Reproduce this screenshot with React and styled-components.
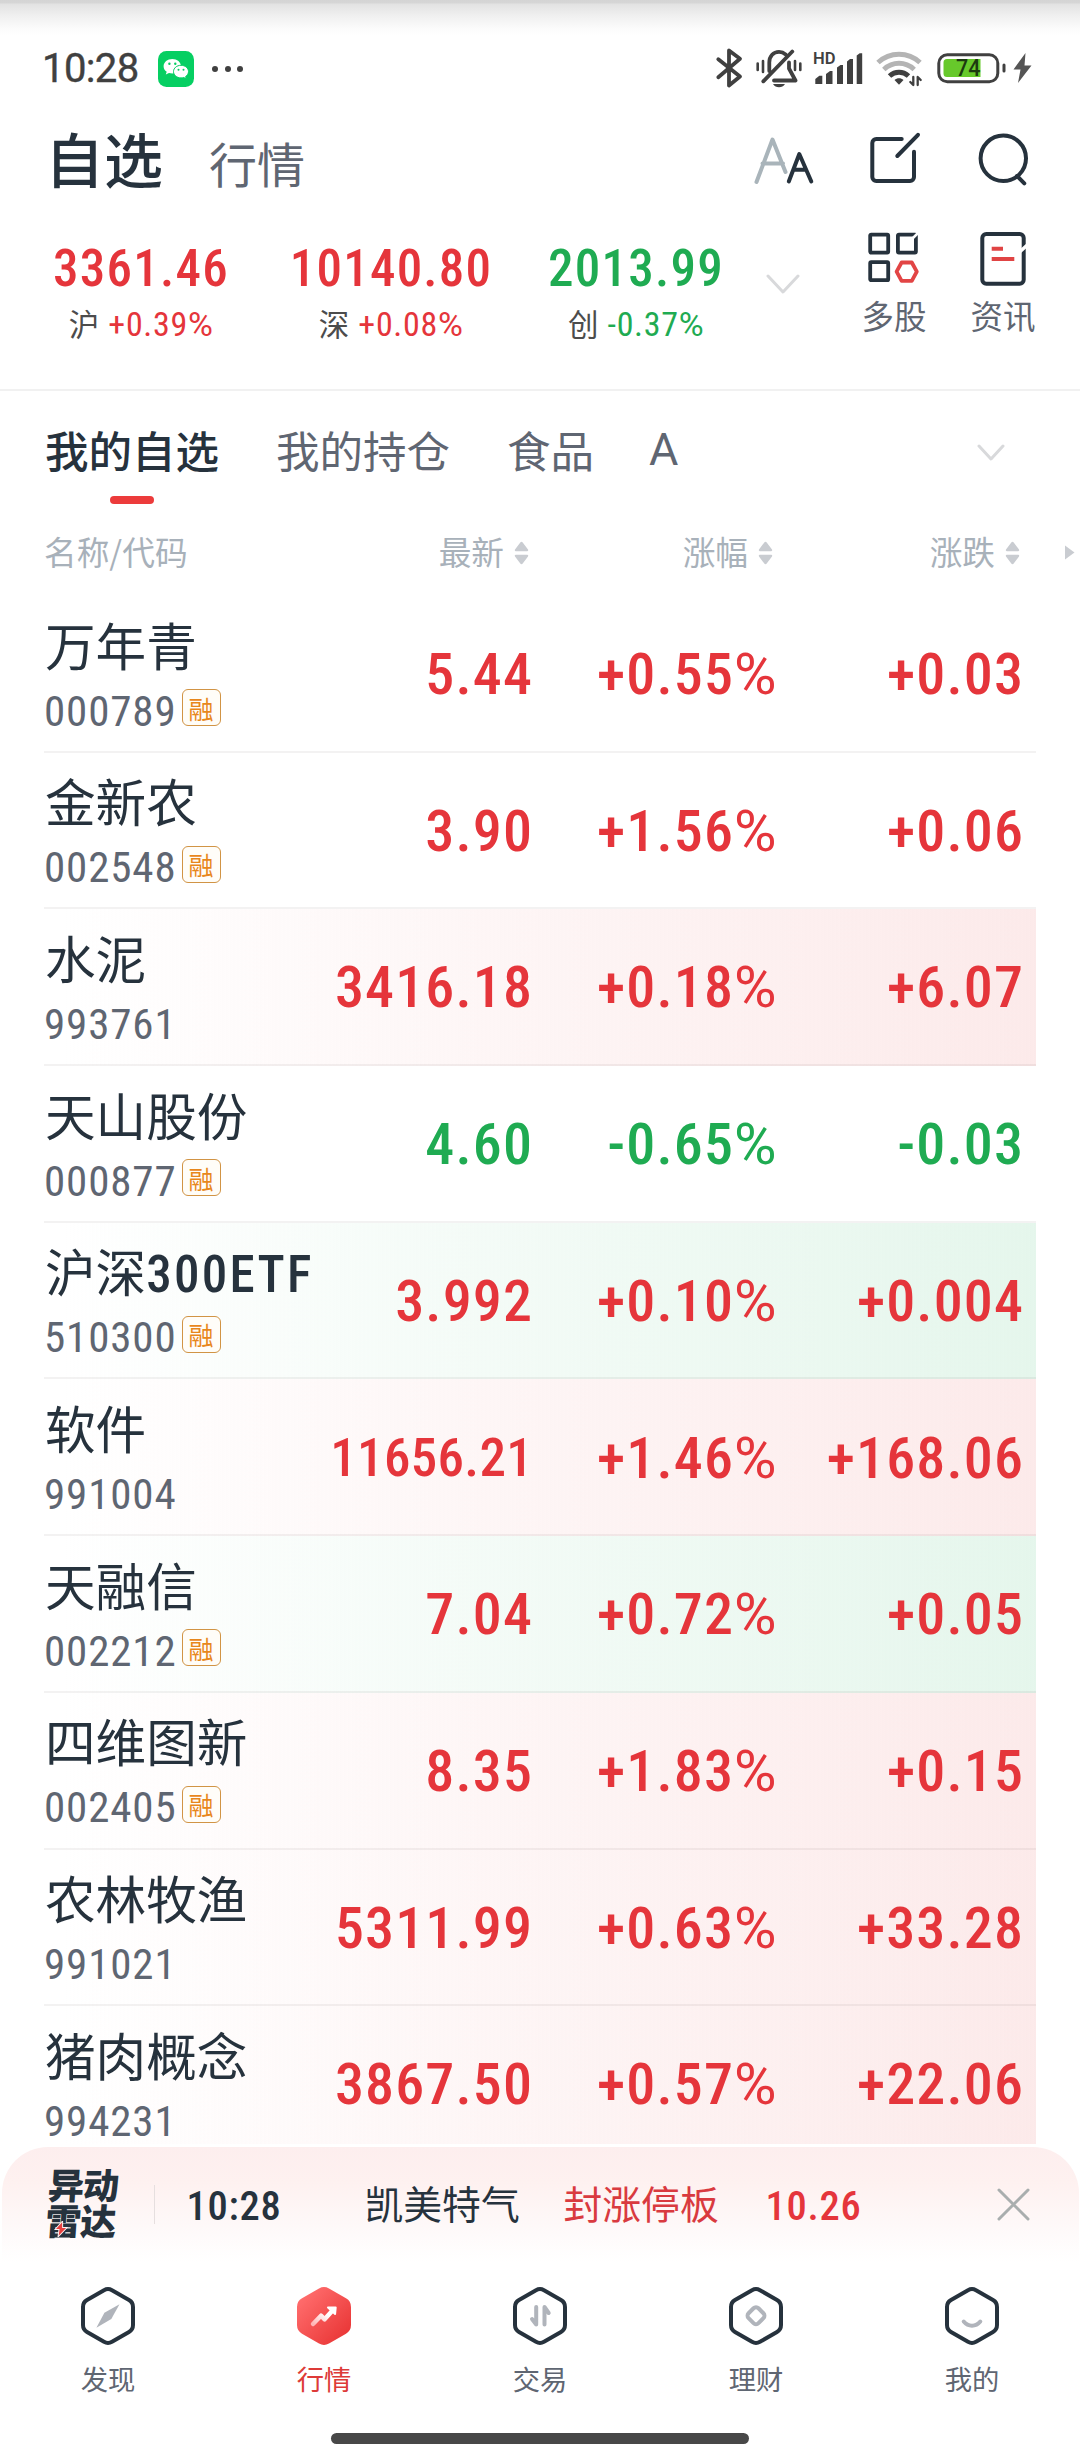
import React from "react";
import styled, { createGlobalStyle, css } from "styled-components";

const CJK = `"Noto Sans CJK SC", sans-serif`;
const NUM = `"Roboto Condensed", Roboto, "Noto Sans CJK SC", sans-serif`;
const INK = "#26323d";
const GREY = "#5f6672";
const RED = "#e5353b";
const GREEN = "#1fab52";

const tone = (t) => (t === "down" ? GREEN : RED);

const Global = createGlobalStyle`
  * { box-sizing: border-box; }
  body { margin: 0; background: #fff; }
  svg { display: block; flex: none; }
`;

const Screen = styled.div`
  width: 1080px;
  height: 2460px;
  display: flex;
  flex-direction: column;
  overflow: hidden;
  background: #fff;
  font-family: ${CJK};
  color: ${INK};
`;

const numeric = css`
  font-family: ${NUM};
  font-stretch: 75%;
  font-weight: 480;
  letter-spacing: 0.02em;
  white-space: nowrap;
`;

/* ---------- status bar ---------- */

const StatusBar = styled.header`
  height: 100px;
  padding: 38px 47px 0 42px;
  display: flex;
  align-items: center;
  justify-content: space-between;
  background: linear-gradient(#d4d4d4 0, #d6d6d6 3px, #e2e2e2 4px, #f0f0f0 16px, #fbfbfb 28px, #fff 36px);
`;

const StatusLeft = styled.div`
  display: flex;
  align-items: center;
`;

const Clock = styled.span`
  width: 116px;
  font: 400 40px/46px Roboto, sans-serif;
  -webkit-text-stroke: 0.4px #404040;
  letter-spacing: -0.6px;
  color: #404040;
`;

const Dots = styled.div`
  display: flex;
  gap: 6.5px;
  margin-left: 18px;
  i {
    width: 6px;
    height: 6px;
    border-radius: 50%;
    background: #404040;
  }
`;

const StatusRight = styled.div`
  display: grid;
  grid-template-columns: 40px 58px 62px 61px 76px 22px;
`;

/* ---------- header ---------- */

const TitleRow = styled.div`
  height: 112px;
  padding: 0 47px 0 45px;
  display: flex;
  align-items: center;
`;

const Title = styled.h1`
  margin: 3px 0 0;
  font-size: 59px;
  font-weight: 500;
  line-height: 70px;
`;

const SubTitle = styled.span`
  margin: 12px auto 0 46px;
  font-size: 48px;
  line-height: 60px;
  color: ${GREY};
`;

const Tools = styled.div`
  display: grid;
  grid-template-columns: 111px 108px 60px;
`;

const Market = styled.section`
  height: 179px;
  padding: 18px 47px 0 16px;
  display: flex;
  border-bottom: 2px solid #f1f1f1;
`;

const Quote = styled.div`
  width: ${(p) => p.$w}px;
  padding-top: 8.5px;
  display: flex;
  flex-direction: column;
  align-items: center;
  gap: 4.5px;
`;

const QuoteValue = styled.span`
  ${numeric}
  font-size: 51px;
  line-height: 60px;
  letter-spacing: 0.024em;
  color: ${(p) => tone(p.$t)};
`;

const QuoteChange = styled.span`
  display: flex;
  align-items: baseline;
  gap: 9px;
  font-size: 30.5px;
  line-height: 40px;
  color: #4c4c4c;
  b {
    ${numeric}
    font-size: 34px;
    font-weight: 450;
    color: ${(p) => tone(p.$t)};
  }
`;

const Percent = styled.span`
  font-family: Roboto, sans-serif;
  font-stretch: 100%;
  font-weight: 400;
  letter-spacing: 0.01em;
`;

const ExpandBox = styled.div`
  width: 54px;
  margin-right: 54px;
  padding: 43.5px 0 0 10px;
`;

const Shortcut = styled.div`
  width: 60px;
  margin-right: ${(p) => (p.$last ? 0 : 49)}px;
  display: flex;
  flex-direction: column;
  align-items: center;
  gap: 5px;
  font-size: 32.5px;
  line-height: 40px;
  white-space: nowrap;
  color: ${GREY};
`;

/* ---------- tabs ---------- */

const Tabs = styled.nav`
  height: 114px;
  padding: 28.5px 75px 0 45px;
  display: flex;
  align-items: flex-start;
  gap: 57px;
`;

const Tab = styled.div`
  display: flex;
  flex-direction: column;
  align-items: center;
  gap: 16.5px;
  font-size: 43.5px;
  line-height: 60px;
  font-weight: ${(p) => (p.$active ? 500 : 400)};
  color: ${(p) => (p.$active ? INK : GREY)};
  &::after {
    content: "";
    width: ${(p) => (p.$active ? 44 : 0)}px;
    height: 8px;
    border-radius: 4px;
    background: #ec3b3b;
  }
`;

const Latin = styled.span`
  margin-left: -2px;
  font-family: Roboto, sans-serif;
  font-size: 45px;
`;

const TabExpand = styled.div`
  margin: 24px 0 0 auto;
`;

/* ---------- table ---------- */

const columns = "280px 207px 244px 247px";

const Head = styled.div`
  height: 91px;
  padding: 1.5px 0 0 44px;
  display: grid;
  grid-template-columns: ${columns} 1fr;
  align-items: center;
  font-size: 32.700px;
  line-height: 40px;
  color: #a8b1ba;
`;

const HeadCell = styled.div`
  display: flex;
  align-items: center;
  justify-content: flex-end;
  gap: 10px;
  padding-right: 2px;
  svg {
    margin-top: 4px;
  }
`;

const MoreColumns = styled.div`
  padding: 3px 0 0 43px;
`;

const List = styled.main`
  height: 1548px;
  overflow: hidden;
`;

const washes = { red: "252, 234, 234", green: "229, 246, 236" };

const Row = styled.div`
  height: 156.7px;
  margin: 0 44px;
  display: grid;
  grid-template-columns: ${columns};
  align-items: center;
  border-bottom: 2px solid rgba(50, 40, 40, 0.06);
  background: ${(p) =>
    p.$wash
      ? `linear-gradient(90deg, rgba(${washes[p.$wash]}, 0) 2%, rgb(${washes[p.$wash]}) 100%)`
      : "none"};
`;

const Stock = styled.div`
  align-self: start;
  padding-top: 17.500px;
  display: flex;
  flex-direction: column;
  gap: 12px;
`;

const Name = styled.div`
  height: 60px;
  margin-left: 1px;
  font-size: 50.600px;
  line-height: 60px;
  white-space: nowrap;
  span {
    ${numeric}
    font-size: 51px;
    letter-spacing: 0.045em;
  }
`;

const Code = styled.div`
  ${numeric}
  display: flex;
  align-items: center;
  gap: 5px;
  height: 50px;
  font-size: 43px;
  font-weight: 430;
  letter-spacing: 0.02em;
  color: ${GREY};
`;

const Badge = styled.span`
  width: 39px;
  height: 37px;
  margin-top: -6px;
  display: flex;
  align-items: center;
  justify-content: center;
  border: 1.5px solid #d19445;
  border-radius: 6px;
  font: 400 25px/32px ${CJK};
  letter-spacing: 0;
  color: #e8871c;
  background: #fffdf8;
`;

const Num = styled.div`
  ${numeric}
  justify-self: end;
  margin: 1.5px calc(-0.02em - 1px) 0 0;
  font-size: ${(p) => (p.$small ? 53 : 58)}px;
  letter-spacing: ${(p) => (p.$small ? 0.006 : 0.02)}em;
  line-height: 70px;
  color: ${(p) => tone(p.$t)};
`;

/* ---------- radar strip ---------- */

const Radar = styled.aside`
  height: 115px;
  margin: 3px 1.5px 0;
  padding: 0 49px 0 45px;
  display: grid;
  grid-template-columns: 107px 33px 178px 199px 202px 1fr 33px;
  align-items: center;
  border-radius: 46px 46px 0 0;
  background: linear-gradient(#fdeeee 0, #fef1f0 30%, #fefafa 75%, #fff 100%);
`;

const Logo = styled.div`
  position: relative;
  width: 74px;
  margin-top: -8px;
  font-size: 36px;
  line-height: 36px;
  font-weight: 900;
  letter-spacing: -1px;
  transform: skewX(-4deg);
  svg {
    position: absolute;
    left: 9px;
    top: 56px;
  }
`;

const Divider = styled.div`
  width: 1px;
  height: 39px;
  background: #e6dfdf;
`;

const RadarNum = styled.span`
  ${numeric}
  margin-top: 2px;
  font-size: 40.500px;
  letter-spacing: 0.018em;
  color: ${(p) => p.$c};
`;

const RadarText = styled.span`
  margin-top: -6px;
  font-size: 38.8px;
  line-height: 50px;
  color: ${(p) => p.$c};
`;

/* ---------- bottom navigation ---------- */

const Nav = styled.nav`
  height: 171px;
  padding-top: 24px;
  display: grid;
  grid-template-columns: repeat(5, 1fr);
`;

const NavItem = styled.div`
  display: flex;
  flex-direction: column;
  align-items: center;
  gap: 14.500px;
  font-size: 27.3px;
  line-height: 34px;
  color: ${(p) => (p.$active ? "#dd3a38" : GREY)};
`;

const HomeBar = styled.div`
  width: 418px;
  height: 11px;
  margin: 0 auto;
  border-radius: 6px;
  background: #484848;
`;

/* ---------- drawings ---------- */

const Line = ({ w, h, sw = 4, c = INK, children }) => (
  <svg width={w} height={h} viewBox={`0 0 ${w} ${h}`} fill="none" stroke={c} strokeWidth={sw} strokeLinecap="round" strokeLinejoin="round">
    {children}
  </svg>
);

const WeChat = () => (
  <svg width="36" height="36" viewBox="0 0 36 36">
    <rect width="36" height="36" rx="8.5" fill="#06cf62" />
    <path d="M14.3 8C9.4 8 5.6 11.2 5.6 15.2c0 2.3 1.2 4.2 3.1 5.5l-.9 2.8 3.2-1.6c1 .3 2.2.5 3.3.5 4.8 0 8.7-3.200 8.7-7.200S19.100 8 14.300 8z" fill="#fff" />
    <circle cx="11.4" cy="12.8" r="1.2" fill="#06cf62" />
    <circle cx="17.3" cy="12.8" r="1.2" fill="#06cf62" />
    <path d="M23 14.300c-4.200 0-7.500 2.800-7.500 6.300s3.300 6.300 7.500 6.300c1 0 1.900-.1 2.800-.4l2.500 1.400-.7-2.400c1.800-1.200 2.900-2.900 2.900-4.900 0-3.500-3.300-6.300-7.500-6.300z" fill="#fff" stroke="#06cf62" strokeWidth="1" />
    <circle cx="20.5" cy="18.8" r="1" fill="#06cf62" />
    <circle cx="25.5" cy="18.8" r="1" fill="#06cf62" />
  </svg>
);

const DARK = "#404040";

const Bluetooth = () => (
  <Line w={30} h={46} sw={3.8} c={DARK}>
    <path d="M4.300 13.200 26 30.500 15 39.500V4.500L26 12.800 4.300 31.300" />
  </Line>
);

const BellOff = () => (
  <Line w={50} h={46} sw={3.8} c={DARK}>
    <path d="M15.300 25V16.500C15.300 10 19.500 5.800 25 5.800c2.500 0 4.800.9 6.500 2.500M9.300 35.300 38.300 5.500M35 16.500v6l6.500 12H20" />
    <path d="M3.700 17.500v6.500M9 15v11M41 15v9M46.300 17.500v6.500" strokeWidth="2.600" />
    <path d="M19 38h12c-1.400 2.300-3.500 3.200-6 3.200S20.400 40.300 19 38z" fill={DARK} stroke="none" />
  </Line>
);

const Signal = () => (
  <svg width="52" height="46" viewBox="0 0 52 46" fill={DARK}>
    <text x="1" y="18" fontFamily="Roboto, sans-serif" fontWeight="600" fontSize="16" textLength="22.5" lengthAdjust="spacingAndGlyphs">HD</text>
    <path d="M3.300 33l4-3.300h3V38h-7z" />
    <path d="M14 28l4-3h2.500v13H14z" />
    <path d="M25 21.500l3.500-2.500H31v19h-6z" />
    <path d="M35 15.500l3-2.500h3v25h-6z" />
    <path d="M44.700 9.500l3-2.200h2.500V38h-5.500z" />
  </svg>
);

const Wifi = () => (
  <Line w={50} h={46} sw={5} c="#b4b4b4">
    <path d="M4 16.500C16 5.500 34 5.500 46 16.500" strokeLinecap="butt" />
    <path d="M9.800 23.500c9-8.200 21.400-8.200 30.400 0" strokeLinecap="butt" />
    <path d="M15.500 30c5.500-5 13.500-5 19 0" stroke={DARK} strokeLinecap="butt" />
    <path d="M20.500 34c2.500-2.500 6.500-2.500 9 0L25 38.800z" fill={DARK} stroke="none" />
    <path d="M39.300 31v8l-3-3M43.700 39v-8l3 3" stroke={DARK} strokeWidth="2.300" />
  </Line>
);

const Battery = () => (
  <svg width="72" height="46" viewBox="0 0 72 46">
    <rect x="3.8" y="8.8" width="59" height="27" rx="8.5" fill="none" stroke={DARK} strokeWidth="3" />
    <rect x="67.500" y="17.500" width="3" height="9" rx="1.500" fill={DARK} />
    <path d="M12 13h33.500v18H12a3.500 3.500 0 0 1-3.500-3.500v-11A3.500 3.500 0 0 1 12 13z" fill="#67c92b" />
    <text x="21" y="30.300" fontFamily="Roboto, sans-serif" fontWeight="500" fontSize="23" textLength="24.500" lengthAdjust="spacingAndGlyphs" fill="#1c3a10">74</text>
  </svg>
);

const Bolt = () => (
  <svg width="22" height="46" viewBox="0 0 22 46">
    <path d="M14.500 7 2.500 23.500h7L7 37 20.500 19.500h-7z" fill="#555" />
  </svg>
);

const FontSize = () => (
  <Line w={60} h={60}>
    <path d="M2.500 56 18.500 13.500 31.500 46M8.500 37.500H29" stroke="#a9b4ba" />
    <path d="M34.800 55.500 45.300 28 57.300 55.500M39.500 43.800H52" />
  </Line>
);

const Edit = () => (
  <Line w={60} h={60}>
    <path d="M36.700 13H11.300a4 4 0 0 0-4 4V51a4 4 0 0 0 4 4H45a4 4 0 0 0 4-4V25.700M53 8.800 32.300 30" />
  </Line>
);

const Search = () => (
  <Line w={60} h={60}>
    <circle cx="30.300" cy="32.300" r="22.700" />
    <path d="M44 50l7.300 7.300" />
  </Line>
);

const MultiStock = () => (
  <Line w={60} h={60} sw={3.8}>
    <rect x="6.200" y="4.600" width="18" height="18" rx="1" />
    <rect x="33.900" y="4.600" width="18" height="18" rx="1" />
    <rect x="6.200" y="32.200" width="18" height="18" rx="1" />
    <path d="M32.600 41.700l5-9.200h10.200l5 9.200-5 9.200H37.600z" stroke="#e24545" />
    <path d="M47 10l8-8" stroke="#fff" strokeWidth="2.500" />
  </Line>
);

const News = () => (
  <Line w={60} h={60}>
    <rect x="9.300" y="4" width="41.400" height="49.700" rx="4" />
    <path d="M18.700 18.700H30M18.700 29H41.300" stroke="#e04444" strokeLinecap="butt" />
    <path d="M46 22.500l10-9" stroke="#fff" strokeWidth="3.500" />
  </Line>
);

const Chevron = ({ w, h }) => (
  <Line w={w + 4} h={h + 4} sw={3} c="#d8d9db">
    <path d={`M2 2l${w / 2} ${h}L${w + 2} 2`} />
  </Line>
);

const Sort = () => (
  <svg width="15" height="24" viewBox="0 0 15 24" fill="#c9ccd1">
    <path d="M6.300 1.400 1 8.600c-.5.8-.2 1.600.8 1.600h11.400c1 0 1.300-.8.8-1.600L8.700 1.400c-.7-.9-1.700-.9-2.400 0z" />
    <path d="M6.300 22.600 1 15.400c-.5-.8-.2-1.600.8-1.600h11.400c1 0 1.300.8.8 1.600l-5.300 7.200c-.7.9-1.700.9-2.400 0z" />
  </svg>
);

const HEX =
  "M26 4.200q4-2.300 8 0L51 14q4 2.300 4 7V39q0 4.700-4 7L34 55.800q-4 2.300-8 0L9 46q-4-2.300-4-7V21q0-4.700 4-7z";
const PALE = "#b0b4bb";

const glyphs = {
  discover: <path d="M41.500 18.300 33.300 33 18.400 41.700 26.400 26.800z" fill={PALE} stroke="none" />,
  trade: (
    <g stroke={PALE}>
      <path d="M26.200 21V38.500L22 33" />
      <path d="M34.500 38.500V21l4.200 6" />
    </g>
  ),
  wealth: <rect x="23" y="22.700" width="14" height="14" rx="3.500" transform="rotate(45 30 29.700)" stroke={PALE} />,
  mine: <path d="M21.700 35.500c4.500 5.500 12.100 5.500 16.600 0" stroke={PALE} />,
};

const NavIcon = ({ kind }) =>
  kind === "market" ? (
    <Line w={60} h={60} sw={4.5}>
      <defs>
        <linearGradient id="hot" x1="0" y1="0" x2="1" y2="1">
          <stop offset="0.100" stopColor="#ff6c6c" />
          <stop offset="0.900" stopColor="#ea3838" />
        </linearGradient>
        <linearGradient id="rise" x1="0" y1="1" x2="1" y2="0">
          <stop offset="0" stopColor="#ffb5b5" />
          <stop offset="0.700" stopColor="#fff" />
        </linearGradient>
      </defs>
      <path d={HEX} fill="url(#hot)" stroke="url(#hot)" strokeWidth="4" />
      <path d="M19 38l8-8.300 3.600 3.600L39 24" stroke="url(#rise)" />
      <path d="M34 21.500h7.700l-.6 6.500z" fill="#fff" stroke="#fff" strokeWidth="2" />
    </Line>
  ) : (
    <Line w={60} h={60}>
      <path d={HEX} />
      {glyphs[kind]}
    </Line>
  );

/* ---------- data ---------- */

const stocks = [
  ["万年青", "000789", 1, "5.44", "+0.55", "+0.03", "up"],
  ["金新农", "002548", 1, "3.90", "+1.56", "+0.06", "up"],
  ["水泥", "993761", 0, "3416.18", "+0.18", "+6.07", "up", "red"],
  ["天山股份", "000877", 1, "4.60", "-0.65", "-0.03", "down"],
  [<>沪深<span>300ETF</span></>, "510300", 1, "3.992", "+0.10", "+0.004", "up", "green"],
  ["软件", "991004", 0, "11656.21", "+1.46", "+168.06", "up", "red"],
  ["天融信", "002212", 1, "7.04", "+0.72", "+0.05", "up", "green"],
  ["四维图新", "002405", 1, "8.35", "+1.83", "+0.15", "up", "red"],
  ["农林牧渔", "991021", 0, "5311.99", "+0.63", "+33.28", "up", "red"],
  ["猪肉概念", "994231", 0, "3867.50", "+0.57", "+22.06", "up", "red"],
];

const quotes = [
  ["3361.46", "沪", "+0.39", "up", 250],
  ["10140.80", "深", "+0.08", "up", 250],
  ["2013.99", "创", "-0.37", "down", 240],
];

const navItems = [
  ["discover", "发现"],
  ["market", "行情"],
  ["trade", "交易"],
  ["wealth", "理财"],
  ["mine", "我的"],
];

export default function App() {
  return (
    <Screen>
      <Global />
      <StatusBar>
        <StatusLeft>
          <Clock>10:28</Clock>
          <WeChat />
          <Dots><i /><i /><i /></Dots>
        </StatusLeft>
        <StatusRight>
          <Bluetooth />
          <BellOff />
          <Signal />
          <Wifi />
          <Battery />
          <Bolt />
        </StatusRight>
      </StatusBar>

      <TitleRow>
        <Title>自选</Title>
        <SubTitle>行情</SubTitle>
        <Tools>
          <FontSize />
          <Edit />
          <Search />
        </Tools>
      </TitleRow>

      <Market>
        {quotes.map(([value, label, change, t, w]) => (
          <Quote key={label} $w={w}>
            <QuoteValue $t={t}>{value}</QuoteValue>
            <QuoteChange $t={t}>
              {label}
              <b>{change}<Percent>%</Percent></b>
            </QuoteChange>
          </Quote>
        ))}
        <ExpandBox><Chevron w={30} h={16} /></ExpandBox>
        <Shortcut><MultiStock />多股</Shortcut>
        <Shortcut $last><News />资讯</Shortcut>
      </Market>

      <Tabs>
        <Tab $active>我的自选</Tab>
        <Tab>我的持仓</Tab>
        <Tab>食品</Tab>
        <Tab><Latin>A</Latin></Tab>
        <TabExpand><Chevron w={24} h={13} /></TabExpand>
      </Tabs>

      <Head>
        <span>名称/代码</span>
        <HeadCell>最新<Sort /></HeadCell>
        <HeadCell>涨幅<Sort /></HeadCell>
        <HeadCell>涨跌<Sort /></HeadCell>
        <MoreColumns>
          <svg width="10" height="15" viewBox="0 0 10 15" fill="#c9ccd1"><path d="M0 .5 9.500 7.500 0 14.500z" /></svg>
        </MoreColumns>
      </Head>

      <List>
        {stocks.map(([name, code, margin, last, pct, diff, t, wash]) => (
          <Row key={code} $wash={wash}>
            <Stock>
              <Name>{name}</Name>
              <Code>
                {code}
                {margin ? <Badge>融</Badge> : null}
              </Code>
            </Stock>
            <Num $t={t} $small={last.length > 7}>{last}</Num>
            <Num $t={t}>{pct}<Percent>%</Percent></Num>
            <Num $t={t}>{diff}</Num>
          </Row>
        ))}
      </List>

      <Radar>
        <Logo>
          异动<br />雷达
          <svg width="14" height="16" viewBox="0 0 14 16"><path d="M8 0 1 8.500h4L4.500 16 13 6.500H8.500z" fill="#e8413f" stroke="#fdf5f5" strokeWidth="1" /></svg>
        </Logo>
        <Divider />
        <RadarNum $c={INK}>10:28</RadarNum>
        <RadarText $c={INK}>凯美特气</RadarText>
        <RadarText $c="#d93a3f">封涨停板</RadarText>
        <RadarNum $c={RED}>10.26</RadarNum>
        <Line w={33} h={33} sw={3} c="#a9aeae"><path d="M2 2l29 29M31 2L2 31" /></Line>
      </Radar>

      <Nav>
        {navItems.map(([kind, label]) => (
          <NavItem key={kind} $active={kind === "market"}>
            <NavIcon kind={kind} />
            {label}
          </NavItem>
        ))}
      </Nav>
      <HomeBar />
    </Screen>
  );
}
